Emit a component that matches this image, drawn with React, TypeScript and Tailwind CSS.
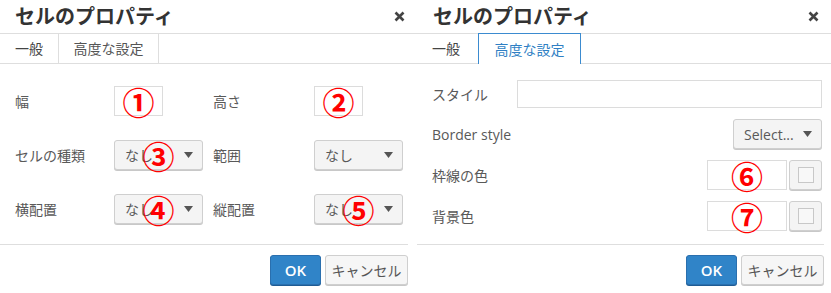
import React from 'react';

const font = 'font-["Open_Sans","Noto_Sans_CJK_JP",sans-serif]';

function CloseIcon() {
  return (
    <svg width="11" height="11" viewBox="0 0 11 11" className="text-[#444]">
      <path d="M1.5 1.5 L9.5 9.5 M9.5 1.5 L1.5 9.5" stroke="currentColor" strokeWidth="2.6" />
    </svg>
  );
}

function Mark({ n }: { n: string }) {
  return (
    <span className='pointer-events-none absolute inset-0 flex items-center justify-center font-["Noto_Sans_CJK_JP",sans-serif] text-[32px] font-bold leading-none text-[#ff0000]'>
      {n}
    </span>
  );
}

function TextBox({ className, mark }: { className: string; mark?: string }) {
  return (
    <div className={'relative h-[30px] border border-[#dcdcdc] bg-white ' + className}>
      {mark && <Mark n={mark} />}
    </div>
  );
}

function SelectBox({ label, className, mark }: { label: string; className: string; mark?: string }) {
  return (
    <div
      className={
        'relative flex h-[30px] items-center justify-between rounded-[3px] border border-[#cfcfcf] bg-[#f4f4f4] pl-[10px] pr-[9px] text-[14px] text-[#595959] shadow-[0_1px_0_#c8c8c8] ' +
        className
      }
    >
      <span>{label}</span>
      <svg width="9" height="6" viewBox="0 0 9 6">
        <path d="M0 0 H9 L4.5 6 Z" fill="#555" />
      </svg>
      {mark && <Mark n={mark} />}
    </div>
  );
}

function ColorBox({ mark }: { mark: string }) {
  return (
    <div className="flex gap-[2px]">
      <TextBox className="w-[80px] border-[#cfcfcf]" mark={mark} />
      <div className="flex h-[30px] w-[33px] items-center justify-center rounded-[3px] border border-[#cfcfcf] bg-[#f4f4f4] shadow-[0_1px_0_#c8c8c8]">
        <div className="h-[16px] w-[16px] border border-[#c8c8c8] bg-[#f8f8f8]" />
      </div>
    </div>
  );
}

function Footer() {
  return (
    <div className="flex h-[49px] justify-end gap-[4px] border-t border-[#dedede] pt-[10px]">
      <button className="h-[30px] w-[51px] rounded-[3px] border border-[#2a6fae] bg-[#3084c8] text-[15px] font-semibold text-white shadow-[0_1px_0_#1f5c94]">
        OK
      </button>
      <button className="h-[30px] w-[83px] rounded-[3px] border border-[#cfcfcf] bg-[#f6f6f6] text-[14px] text-[#555] shadow-[0_1px_0_#c8c8c8]">
        キャンセル
      </button>
    </div>
  );
}

function Header({ pl }: { pl: string }) {
  return (
    <div className={'flex h-[34px] items-center justify-between border-b border-[#dedede] pr-[12px] ' + pl}>
      <h1 className="text-[20px] font-bold text-[#333]">セルのプロパティ</h1>
      <CloseIcon />
    </div>
  );
}

function GeneralPanel() {
  const label = 'text-[14px] text-[#595959]';
  return (
    <div className="flex w-[417px] flex-col">
      <Header pl="pl-[15px]" />
      <div className="flex h-[30px] border-b border-[#dedede] text-[14px]">
        <div className="flex w-[59px] items-center border-r border-[#dedede] pl-[15px] text-[#444]">一般</div>
        <div className="flex w-[100px] items-center justify-center border-r border-[#dedede] text-[#555]">高度な設定</div>
      </div>
      <div className="flex flex-1 flex-col gap-[24px] pl-[15px] pt-[22px]">
        <div className="flex items-center">
          <span className={label + ' w-[99px]'}>幅</span>
          <TextBox className="w-[49px]" mark="①" />
          <span className={label + ' ml-[50px] w-[101px]'}>高さ</span>
          <TextBox className="w-[49px]" mark="②" />
        </div>
        <div className="flex items-center">
          <span className={label + ' w-[99px]'}>セルの種類</span>
          <SelectBox label="なし" className="w-[89px]" mark="③" />
          <span className={label + ' ml-[10px] w-[101px]'}>範囲</span>
          <SelectBox label="なし" className="w-[89px]" />
        </div>
        <div className="flex items-center">
          <span className={label + ' w-[99px]'}>横配置</span>
          <SelectBox label="なし" className="w-[89px]" mark="④" />
          <span className={label + ' ml-[10px] w-[101px]'}>縦配置</span>
          <SelectBox label="なし" className="w-[89px]" mark="⑤" />
        </div>
      </div>
      <div className="pr-[9px]">
        <Footer />
      </div>
    </div>
  );
}

function AdvancedPanel() {
  const label = 'text-[14px] text-[#595959]';
  return (
    <div className="flex flex-1 flex-col">
      <Header pl="pl-[16px]" />
      <div className="-mt-px flex h-[31px] border-b border-[#dedede] text-[14px]">
        <div className="flex w-[61px] items-center pl-[15px] pt-px text-[#444]">一般</div>
        <div className="-mb-px flex w-[103px] items-center justify-center border border-b-0 border-[#3b8bd0] bg-white text-[#2f7fc4]">
          高度な設定
        </div>
      </div>
      <div className="flex flex-1 flex-col gap-[11px] pl-[15px] pr-[9px] pt-[16px]">
        <div className="flex h-[28px] items-center justify-between">
          <span className={label}>スタイル</span>
          <div className="h-[28px] w-[305px] border border-[#dcdcdc] bg-white" />
        </div>
        <div className="flex items-center justify-between">
          <span className={label}>Border style</span>
          <SelectBox label="Select..." className="w-[89px]" />
        </div>
        <div className="flex items-center justify-between">
          <span className={label}>枠線の色</span>
          <ColorBox mark="⑥" />
        </div>
        <div className="flex items-center justify-between">
          <span className={label}>背景色</span>
          <ColorBox mark="⑦" />
        </div>
      </div>
      <div className="pr-[7px]">
        <Footer />
      </div>
    </div>
  );
}

export default function App() {
  return (
    <div className={'flex h-[293px] w-[831px] overflow-hidden bg-white ' + font}>
      <GeneralPanel />
      <AdvancedPanel />
    </div>
  );
}
